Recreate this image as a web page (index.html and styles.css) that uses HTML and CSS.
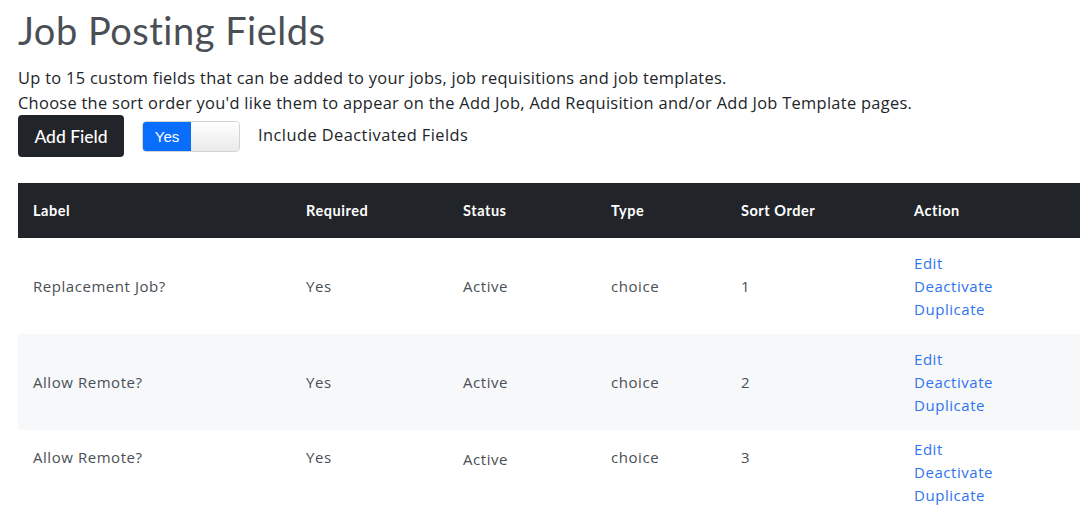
FILE: index.html
```html
<!DOCTYPE html>
<html lang="en">
<head>
<meta charset="utf-8">
<title>Job Posting Fields</title>
<link rel="stylesheet" href="styles.css">
</head>
<body>
<main class="page">
  <h1 class="title">Job Posting Fields</h1>
  <p class="intro">Up to 15 custom fields that can be added to your jobs, job requisitions and job templates.<br>Choose the sort order you'd like them to appear on the Add Job, Add Requisition and/or Add Job Template pages.</p>
  <div class="toolbar">
    <button class="btn-dark" type="button">Add Field</button>
    <div class="toggle"><span class="toggle-on">Yes</span><span class="toggle-handle"></span></div>
    <span class="toggle-label">Include Deactivated Fields</span>
  </div>
  <table class="fields">
    <thead>
      <tr>
        <th class="c-label">Label</th>
        <th class="c-req">Required</th>
        <th class="c-status">Status</th>
        <th class="c-type">Type</th>
        <th class="c-sort">Sort Order</th>
        <th class="c-action">Action</th>
      </tr>
    </thead>
    <tbody>
      <tr>
        <td>Replacement Job?</td>
        <td>Yes</td>
        <td>Active</td>
        <td>choice</td>
        <td>1</td>
        <td class="actions"><a href="#">Edit</a><a href="#">Deactivate</a><a href="#">Duplicate</a></td>
      </tr>
      <tr class="striped">
        <td>Allow Remote?</td>
        <td>Yes</td>
        <td>Active</td>
        <td>choice</td>
        <td>2</td>
        <td class="actions"><a href="#">Edit</a><a href="#">Deactivate</a><a href="#">Duplicate</a></td>
      </tr>
      <tr class="last">
        <td>Allow Remote?</td>
        <td>Yes</td>
        <td class="low">Active</td>
        <td>choice</td>
        <td>3</td>
        <td class="actions"><a href="#">Edit</a><a href="#">Deactivate</a><a href="#">Duplicate</a></td>
      </tr>
    </tbody>
  </table>
</main>
</body>
</html>
```
FILE: styles.css
```css
html, body {
  margin: 0;
  padding: 0;
  background: #fff;
}
body {
  font-family: "Open Sans", Lato, sans-serif;
  color: #212529;
}
.page {
  padding: 0 12px 0 18px;
}
.title {
  margin: 0;
  padding-top: 7px;
  font-family: Lato, "Open Sans", sans-serif;
  font-size: 38px;
  font-weight: 400;
  line-height: 46px;
  color: #4a4f55;
  letter-spacing: 0.5px;
}
.intro {
  margin: 12px 0 0;
  font-size: 16.4px;
  line-height: 25px;
  letter-spacing: 0.3px;
  color: #212529;
}
.toolbar {
  display: flex;
  align-items: center;
  margin-top: 0;
}
.btn-dark {
  width: 106px;
  height: 42px;
  border: 0;
  border-radius: 4px;
  background: #212529;
  color: #fff;
  font-family: Lato, "Open Sans", sans-serif;
  font-size: 17.5px;
  font-weight: 500;
  padding: 0;
}
.toggle {
  display: flex;
  width: 96px;
  height: 29px;
  margin-left: 18px;
  border: 1px solid #d3d3d3;
  border-radius: 4px;
  overflow: hidden;
}
.toggle-on {
  width: 48px;
  background: #0a6efd;
  color: #fff;
  font-family: "Liberation Sans", Arial, sans-serif;
  font-size: 15px;
  display: flex;
  align-items: center;
  justify-content: center;
}
.toggle-handle {
  flex: 1;
  background: linear-gradient(#fff, #e9e9e9);
}
.toggle-label {
  margin-left: 18px;
  margin-top: -4px;
  font-size: 16.4px;
  letter-spacing: 0.45px;
}
.fields {
  width: 1062px;
  margin-top: 26px;
  border-collapse: collapse;
  font-size: 15px;
  letter-spacing: 0.55px;
}
.fields th {
  background: #212529;
  color: #fff;
  text-align: left;
  font-family: Lato, "Open Sans", sans-serif;
  font-size: 14.5px;
  font-weight: 700;
  height: 55px;
  padding: 0 12px 0 15px;
  box-sizing: border-box;
  letter-spacing: 0.55px;
}
.c-label { width: 273px; }
.c-req { width: 157px; }
.c-status { width: 148px; }
.c-type { width: 130px; }
.c-sort { width: 173px; }
.fields td {
  height: 96px;
  padding: 0 12px 0 15px;
  box-sizing: border-box;
  color: #4a4f55;
  vertical-align: middle;
  line-height: 23px;
}
.fields tr.striped td {
  background: #f7f8fa;
}
.actions a {
  display: block;
  color: #2f74f0;
  text-decoration: none;
}
.fields tr.last td {
  vertical-align: top;
  padding-top: 16px;
}
.fields tr.last td.actions {
  padding-top: 8px;
}
.fields tr.last td.low {
  padding-top: 18px;
}
```
